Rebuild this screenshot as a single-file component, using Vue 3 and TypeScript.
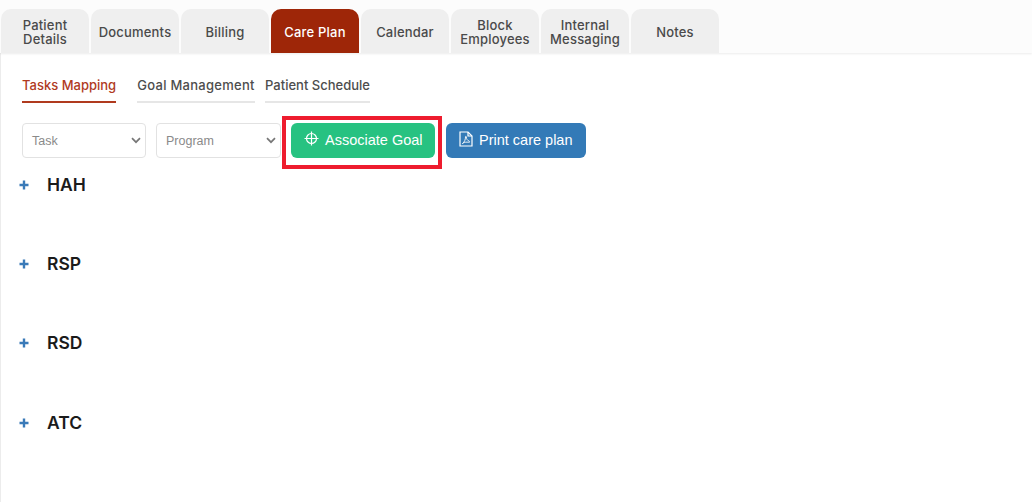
<script setup lang="ts">
interface Tab { label: string[]; active?: boolean }
const tabs: Tab[] = [
  { label: ['Patient', 'Details'] },
  { label: ['Documents'] },
  { label: ['Billing'] },
  { label: ['Care Plan'], active: true },
  { label: ['Calendar'] },
  { label: ['Block', 'Employees'] },
  { label: ['Internal', 'Messaging'] },
  { label: ['Notes'] },
]
const subTabs = [
  { label: 'Tasks Mapping', cls: 'first', active: true },
  { label: 'Goal Management', cls: 'second', active: false },
  { label: 'Patient Schedule', cls: 'third', active: false },
]
const groups = ['HAH', 'RSP', 'RSD', 'ATC']
</script>

<template>
  <div class="page">
    <nav class="tabs">
      <div v-for="t in tabs" :key="t.label.join()" class="tab" :class="{ active: t.active }">
        <span v-for="l in t.label" :key="l">{{ l }}</span>
      </div>
    </nav>
    <main class="content">
      <div class="subtabs">
        <div v-for="s in subTabs" :key="s.label" class="subtab" :class="[s.cls, { active: s.active }]">{{ s.label }}</div>
      </div>
      <div class="toolbar">
        <div class="select task">
          <span>Task</span>
          <svg width="10" height="7" viewBox="0 0 10 7"><path d="M1 1.200 5 5.200l4-4" fill="none" stroke="#777" stroke-width="1.700" /></svg>
        </div>
        <div class="select program">
          <span>Program</span>
          <svg width="10" height="7" viewBox="0 0 10 7"><path d="M1 1.200 5 5.200l4-4" fill="none" stroke="#777" stroke-width="1.700" /></svg>
        </div>
        <div class="highlight-wrap">
          <button class="btn green">
            <svg width="15" height="15" viewBox="0 0 15 15" fill="none" stroke="#fff" stroke-width="1.200">
              <circle cx="7.500" cy="7.500" r="5" />
              <path d="M7.500 0.500v14M0.500 7.500h14" />
            </svg>
            Associate Goal
          </button>
          <div class="annotation"></div>
        </div>
        <button class="btn blue">
          <svg width="14" height="16" viewBox="0 0 14 16" fill="none" stroke="#fff" stroke-width="1.200">
            <path d="M1 1h8l4 4v10H1z" />
            <path d="M9 1v4h4" />
            <path d="M3.500 12.500c2-1.500 3-4 3-6.500 0-1 .8-.8.8 0 0 2 1.200 3.500 3 4.300 1 .5.300 1.200-.7 1-2-.4-4-.2-5.500.8-.6.400-1 .8-.6.400z" stroke-width="0.900" />
          </svg>
          Print care plan
        </button>
      </div>
      <div class="groups">
        <div v-for="g in groups" :key="g" class="group">
          <span class="plus">
            <svg width="10" height="10" viewBox="0 0 10 10"><path d="M5 0.500v9M0.500 5h9" stroke="#3a7ab8" stroke-width="2.400" /></svg>
          </span>
          <span class="name">{{ g }}</span>
        </div>
      </div>
    </main>
  </div>
</template>

<style>
html, body { margin: 0; background: #fff; overflow: hidden; }
</style>

<style scoped>
.page {
  width: 1032px;
  height: 502px;
  background: #fff;
  font-family: "Inter", "Open Sans", sans-serif;
  display: flex;
  flex-direction: column;
  overflow: hidden;
}
.tabs {
  display: flex;
  gap: 2px;
  height: 53px;
  box-sizing: border-box;
  padding: 9px 0 0 1px;
  background: #fcfcfc;
  box-shadow: 0 1px 2px rgba(0, 0, 0, 0.08);
  position: relative;
}
.tab {
  width: 88px;
  box-sizing: border-box;
  padding-top: 2px;
  background: #efefef;
  border-radius: 10px 10px 0 0;
  display: flex;
  flex-direction: column;
  align-items: center;
  justify-content: center;
  font-size: 13px;
  letter-spacing: 0.2px;
  line-height: 14px;
  font-weight: 500;
  color: #4a4a4a;
}
.tab.active {
  background: #9e2608;
  color: #fff;
}
.content {
  flex: 1;
  border-left: 1px solid #ececec;
  padding: 22px 0 0 21px;
}
.subtabs {
  display: flex;
  height: 28px;
}
.subtab {
  font-size: 13px;
  line-height: 20px;
  height: 28px;
  box-sizing: border-box;
  font-weight: 500;
  color: #4d4d4d;
  border-bottom: 2px solid #e6e6e6;
  white-space: nowrap;
  text-align: center;
}
.subtab.first { width: 94px; margin-right: 21px; }
.subtab.second { width: 118px; margin-right: 10px; letter-spacing: 0.27px; }
.subtab.third { width: 105px; }
.subtab.active {
  color: #b03a1e;
  border-bottom-color: #b03a1e;
}
.toolbar {
  display: flex;
  align-items: center;
  margin-top: 20px;
  height: 35px;
}
.select {
  height: 35px;
  box-sizing: border-box;
  border: 1px solid #e2e2e2;
  border-radius: 4px;
  background: #fff;
  display: flex;
  align-items: center;
  justify-content: space-between;
  padding: 0 4px 0 9px;
  font-family: "Liberation Sans", Arial, sans-serif;
  font-size: 12.500px;
  color: #8a8a8a;
}
.select.task { width: 124px; margin-right: 10px; }
.select.program { width: 125px; margin-right: 10px; }
.highlight-wrap {
  position: relative;
  margin-right: 11px;
}
.btn {
  height: 35px;
  border: none;
  border-radius: 6px;
  color: #fff;
  font-family: "Liberation Sans", Arial, sans-serif;
  font-size: 14.500px;
  display: flex;
  align-items: center;
  padding: 0 0 2px;
  box-sizing: border-box;
}
.btn svg { margin-bottom: 2px; }
.btn.green {
  width: 144px;
  background: #27c281;
  padding-left: 13px;
  gap: 6px;
}
.btn.blue {
  width: 140px;
  background: #337ab7;
  padding-left: 13px;
  gap: 6px;
}
.annotation {
  position: absolute;
  left: -9px;
  top: -7px;
  width: 160px;
  height: 53px;
  box-sizing: border-box;
  border: 4px solid #ee1c2e;
  pointer-events: none;
}
.groups {
  margin-top: 7px;
  margin-left: -3px;
}
.group {
  height: 79.200px;
  display: flex;
  align-items: flex-start;
}
.plus {
  width: 28px;
  height: 40px;
  display: flex;
  align-items: center;
}
.name {
  font-size: 17.500px;
  line-height: 39px;
  font-weight: 600;
  color: #1b1b1b;
}
</style>
